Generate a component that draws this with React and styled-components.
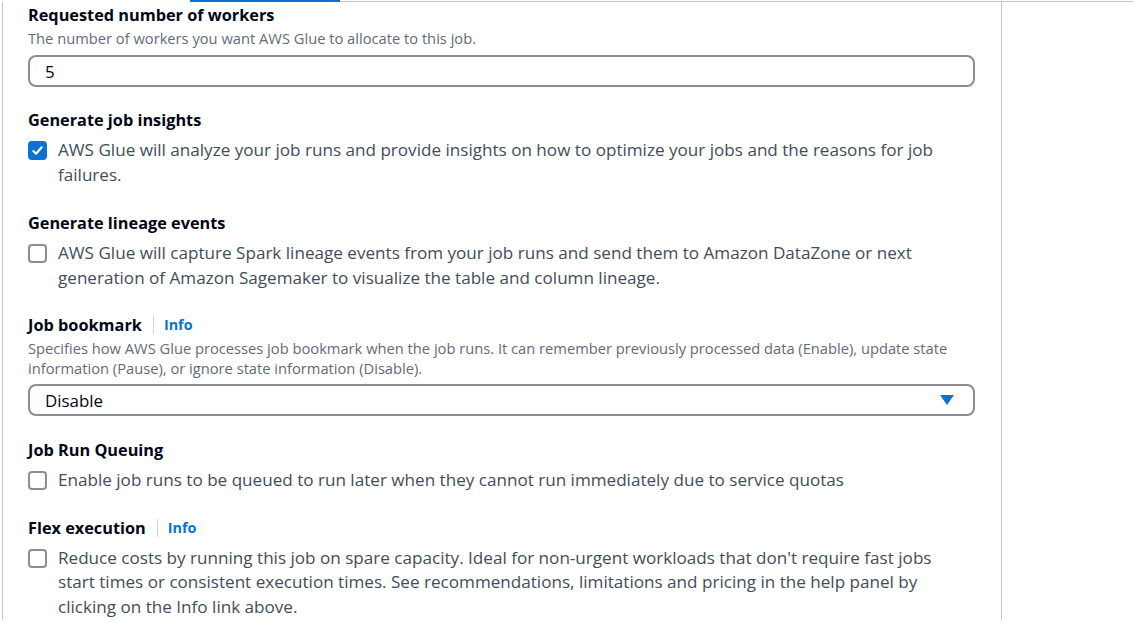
import React from 'react'
import styled, { createGlobalStyle } from 'styled-components'

const GlobalStyle = createGlobalStyle`
  body {
    margin: 0;
    background: #ffffff;
    font-family: 'Open Sans', 'Noto Sans', Arial, sans-serif;
    color: #000716;
  }
`

const Page = styled.div`
  width: 1133px;
  height: 630px;
  overflow: hidden;
`

const TopRule = styled.div`
  display: flex;
  height: 2px;
  align-items: flex-end;
`

const Spacer = styled.div`
  width: 190px;
`

const ActiveTab = styled.div`
  width: 150px;
  height: 2px;
  background: #0972d3;
`

const RestLine = styled.div`
  flex: 1;
  height: 1px;
  background: #c6c6cd;
`

const Panel = styled.div`
  margin-left: 2px;
  width: 1000px;
  height: 618px;
  border-left: 1px solid #c6c6cd;
  border-right: 1px solid #c6c6cd;
  box-sizing: border-box;
  padding: 2px 25px 0 25px;
  display: flex;
  flex-direction: column;
`

const Field = styled.div`
  display: flex;
  flex-direction: column;
  margin-bottom: ${(p) => p.$gap || 0}px;
`

const LabelRow = styled.div`
  display: flex;
  align-items: center;
  height: 22px;
`

const Label = styled.span`
  font-size: 16.3px;
  font-weight: 700;
  color: #000716;
  line-height: 22px;
`

const Divider = styled.span`
  width: 1px;
  height: 18px;
  background: #d1d5db;
  margin: 0 10px 0 11px;
`

const InfoLink = styled.span`
  font-size: 14.4px;
  font-weight: 700;
  color: #0972d3;
  line-height: 22px;
`

const Desc = styled.div`
  font-size: 14.7px;
  line-height: 20px;
  color: #5f6b7a;
  margin-top: 2px;
  max-width: 947px;
`

const InputBox = styled.div`
  margin-top: ${(p) => p.$top || 7}px;
  width: 947px;
  height: 32px;
  box-sizing: border-box;
  border: 2px solid #8c8c94;
  border-radius: 8px;
  padding: 0 15px;
  display: flex;
  align-items: center;
  justify-content: space-between;
  font-size: 16.9px;
  color: #000716;
`

const Caret = styled.svg`
  width: 14px;
  height: 10px;
  margin-right: 4px;
`

const CheckRow = styled.div`
  display: flex;
  align-items: flex-start;
  margin-top: 7px;
`

const Box = styled.div`
  flex: none;
  width: 19px;
  height: 19px;
  box-sizing: border-box;
  border-radius: 4px;
  margin-top: 3px;
  margin-right: 11px;
  display: flex;
  align-items: center;
  justify-content: center;
  background: ${(p) => (p.$checked ? '#0972d3' : '#ffffff')};
  border: 2px solid ${(p) => (p.$checked ? '#0972d3' : '#8c8c94')};
`

const CheckText = styled.div`
  font-size: 17.1px;
  line-height: 24.5px;
  color: #414d5c;
  width: 900px;
`

const Checkbox = ({ checked, children }) => (
  <CheckRow>
    <Box $checked={checked}>
      {checked && (
        <svg width="13" height="13" viewBox="0 0 14 14">
          <path d="M2.5 7.5 L5.5 10.5 L11.5 3.5" fill="none" stroke="#fff" strokeWidth="2.2" strokeLinecap="round" strokeLinejoin="round" />
        </svg>
      )}
    </Box>
    <CheckText>{children}</CheckText>
  </CheckRow>
)

export default function App() {
  return (
    <Page>
      <GlobalStyle />
      <TopRule>
        <Spacer />
        <ActiveTab />
        <RestLine />
      </TopRule>
      <Panel>
        <Field $gap={22}>
          <LabelRow>
            <Label>Requested number of workers</Label>
          </LabelRow>
          <Desc>The number of workers you want AWS Glue to allocate to this job.</Desc>
          <InputBox>5</InputBox>
        </Field>

        <Field $gap={25}>
          <LabelRow>
            <Label>Generate job insights</Label>
          </LabelRow>
          <Checkbox checked>
            AWS Glue will analyze your job runs and provide insights on how to optimize your jobs and the reasons for job failures.
          </Checkbox>
        </Field>

        <Field $gap={24}>
          <LabelRow>
            <Label>Generate lineage events</Label>
          </LabelRow>
          <Checkbox>
            AWS Glue will capture Spark lineage events from your job runs and send them to Amazon DataZone or next generation of Amazon Sagemaker to visualize the table and column lineage.
          </Checkbox>
        </Field>

        <Field $gap={23}>
          <LabelRow>
            <Label>Job bookmark</Label>
            <Divider />
            <InfoLink>Info</InfoLink>
          </LabelRow>
          <Desc>
            Specifies how AWS Glue processes job bookmark when the job runs. It can remember previously processed data (Enable), update state information (Pause), or ignore state information (Disable).
          </Desc>
          <InputBox $top={6}>
            Disable
            <Caret viewBox="0 0 14 10">
              <path d="M0 0 H14 L7 10 Z" fill="#0972d3" />
            </Caret>
          </InputBox>
        </Field>

        <Field $gap={24}>
          <LabelRow>
            <Label>Job Run Queuing</Label>
          </LabelRow>
          <Checkbox>
            Enable job runs to be queued to run later when they cannot run immediately due to service quotas
          </Checkbox>
        </Field>

        <Field>
          <LabelRow>
            <Label>Flex execution</Label>
            <Divider />
            <InfoLink>Info</InfoLink>
          </LabelRow>
          <Checkbox>
            Reduce costs by running this job on spare capacity. Ideal for non-urgent workloads that don't require fast jobs start times or consistent execution times. See recommendations, limitations and pricing in the help panel by clicking on the Info link above.
          </Checkbox>
        </Field>
      </Panel>
    </Page>
  )
}
